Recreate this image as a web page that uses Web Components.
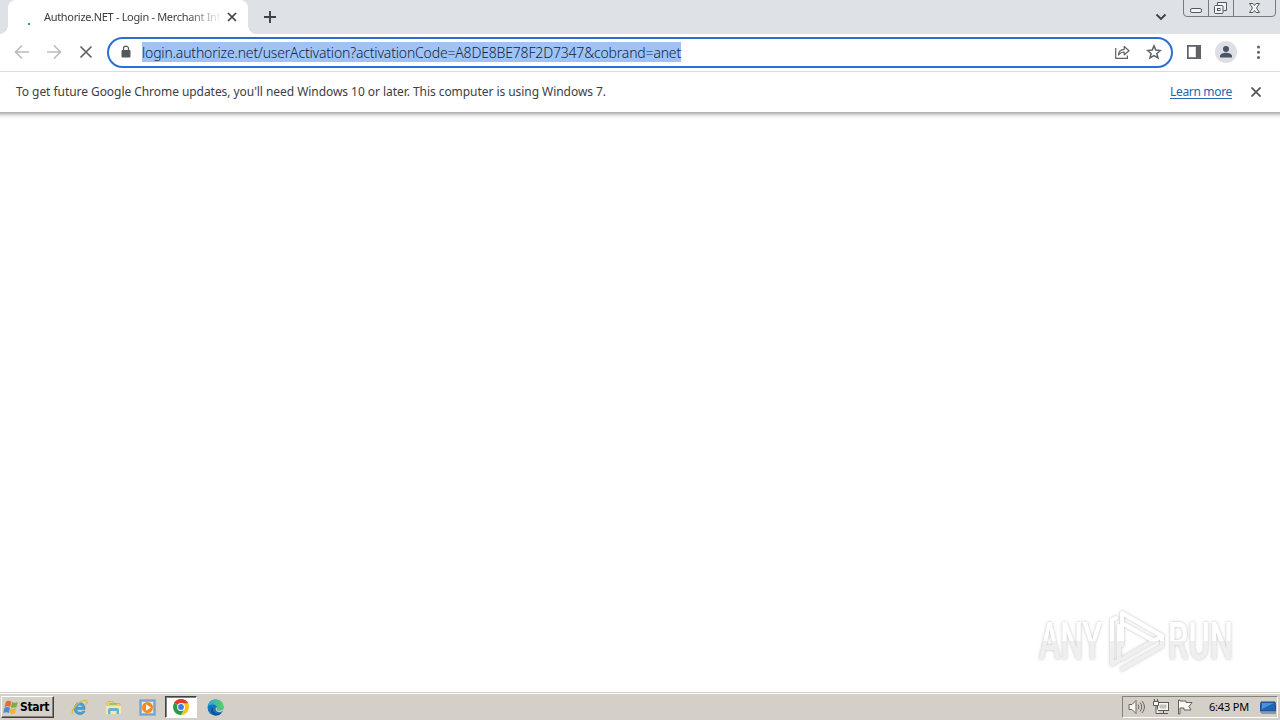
<!DOCTYPE html>
<html lang="en">
<head>
<meta charset="utf-8">
<title>Authorize.NET - Login</title>
<style>
  html, body { margin: 0; width: 1280px; height: 720px; overflow: hidden; background: #fff; }
  body { display: flex; flex-direction: column; font-family: "Noto Sans", "Open Sans", sans-serif; }
</style>
</head>
<body>
<browser-tabs></browser-tabs>
<browser-toolbar></browser-toolbar>
<info-bar>
  <fit-text width="590">To get future Google Chrome updates, you'll need Windows 10 or later. This computer is using Windows 7.</fit-text>
  <fit-text slot="action" width="62">Learn more</fit-text>
</info-bar>
<page-view></page-view>
<task-bar></task-bar>

<script>
function define(name, html) {
  customElements.define(name, class extends HTMLElement {
    constructor() {
      super();
      this.attachShadow({ mode: "open" }).innerHTML = html;
    }
  });
}

define("window-buttons", `
  <style>
    :host { display: block; width: 94px; height: 18px; }
    svg { display: block; }
  </style>
  <svg width="94" height="18" fill="none" stroke="#777a80">
    <path d="M.5 0v13q0 3.500 3.500 3.500h85q3.500 0 3.500-3.500V0M25.500 0v16M50.500 0v16"/>
    <g stroke="#55585e">
      <rect x="7.500" y="8.500" width="11" height="4" rx="1.500" fill="#f2f3f5"/>
      <path d="M34.500 5.500v-3h9v8h-3" fill="#f2f3f5"/>
      <rect x="31.500" y="5.500" width="8.500" height="8" rx="1" fill="#f2f3f5"/>
      <rect x="34.500" y="8.500" width="2.500" height="2"/>
      <path d="M66.500 3.500h3.500l1.500 2 1.500-2h3.500l-3 4.500 3 4.500H73l-1.500-2-1.500 2h-3.500l3-4.500z" fill="#f2f3f5"/>
    </g>
  </svg>
`);

define("browser-tabs", `
  <style>
    :host { display: flex; flex: none; height: 34px; background: #dee1e6; }
    .tab { display: flex; align-items: center; box-sizing: border-box; width: 240px; margin-left: 8px; padding: 0 10px 0 16px; background: #fff; border-radius: 8px 8px 0 0; position: relative; }
    .tab::before, .tab::after { content: ""; position: absolute; bottom: 0; width: 8px; height: 8px; }
    .tab::before { left: -8px; background: radial-gradient(circle at 0 0, transparent 7.500px, #fff 8px); }
    .tab::after { right: -8px; background: radial-gradient(circle at 100% 0, transparent 7.500px, #fff 8px); }
    .spinner { flex: none; width: 19px; height: 16px; }
    .title { width: 176px; margin-left: 1px; font-size: 11px; line-height: 16px; color: #3c4043; -webkit-mask-image: linear-gradient(90deg, #000 143px, transparent 178px); }
    .close { margin-left: 7px; }
    .new { margin: 10px 0 0 15px; }
    .search { margin: 13px 16px 0 auto; }
    window-buttons { margin-right: 3px; }
    svg { display: block; flex: none; }
  </style>
  <div class="tab">
    <svg class="spinner" width="19" height="16"><rect x="4" y="14" width="2" height="2" fill="#3d88d8"/></svg>
    <div class="title"><fit-text width="176">Authorize.NET - Login - Merchant Inf</fit-text></div>
    <svg class="close" width="10" height="10" stroke="#3c4043" stroke-width="1.700"><path d="M1 1l8 8M9 1L1 9"/></svg>
  </div>
  <svg class="new" width="14" height="14" stroke="#3c4043" stroke-width="1.900"><path d="M1 7h12M7 1v12"/></svg>
  <svg class="search" width="12" height="8" fill="none" stroke="#3c4043" stroke-width="1.800"><path d="M1.500 1.500L6 6l4.500-4.500"/></svg>
  <window-buttons></window-buttons>
`);

define("browser-toolbar", `
  <style>
    :host { display: flex; flex: none; align-items: center; box-sizing: border-box; height: 38px; padding: 0 13px 1px 14px; background: #fff; border-bottom: 1px solid #dadce0; }
    svg { display: block; flex: none; }
    .nav { display: flex; gap: 16px; }
    .address { display: flex; align-items: center; box-sizing: border-box; width: 1066px; height: 31px; margin-left: 13px; padding: 0 9px; border: 2px solid #2a70d2; border-radius: 16px; }
    .url { margin-left: 8px; height: 20px; background: #a0c3f5; color: #16233f; font-size: 14px; line-height: 21px; font-weight: 300; }
    .share { margin-left: auto; }
    .star { margin-left: 16px; }
    .panel { margin-left: 13px; }
    .profile { margin: 0 18px 0 13px; }
  </style>
  <div class="nav">
    <svg width="16" height="16" fill="none" stroke="#babcbe" stroke-width="1.700"><path d="M15 8H2M8 1.500L1.500 8 8 14.500"/></svg>
    <svg width="16" height="16" fill="none" stroke="#babcbe" stroke-width="1.700"><path d="M1 8h13M8 1.500L14.500 8 8 14.500"/></svg>
    <svg width="16" height="16" stroke="#5f6368" stroke-width="1.700"><path d="M2.500 2.500l11 11M13.500 2.500l-11 11"/></svg>
  </div>
  <div class="address">
    <svg width="16" height="16"><rect x="3.500" y="6" width="9" height="7.500" rx="1" fill="#55595d"/><path d="M5.500 6.500V4.700a2.500 2.500 0 015 0v1.800" fill="none" stroke="#55595d" stroke-width="1.200"/></svg>
    <fit-text class="url" width="539">login.authorize.net/userActivation?activationCode=A8DE8BE78F2D7347&amp;cobrand=anet</fit-text>
    <svg class="share" width="16" height="16" fill="none" stroke="#5f6368" stroke-width="1.200"><path d="M1.700 4v10.400h11.700v-3"/><path d="M4.500 11q.3-5.500 5.700-5.700V2.500L15 6.700l-4.800 4.100V8Q7 7.800 4.500 11z" stroke-linejoin="round"/></svg>
    <svg class="star" width="16" height="16" fill="none" stroke="#5f6368" stroke-width="1.500"><path d="M8 1.900l1.800 4.200 4.600.4-3.500 3 1.100 4.500L8 11.600 4 14l1.100-4.500-3.500-3 4.600-.4z"/></svg>
  </div>
  <svg class="panel" width="16" height="16"><path fill="#5f6368" fill-rule="evenodd" d="M1 1h14v14H1zm1.700 1.700v10.600h7.100V2.700z"/></svg>
  <svg class="profile" width="22" height="22"><circle cx="11" cy="11" r="11" fill="#dcdfe4"/><g fill="#4b5366"><circle cx="11" cy="8" r="3"/><path d="M5 16.500v-1.300c0-2.300 3.500-3.400 6-3.400s6 1.100 6 3.400v1.300z"/></g></svg>
  <svg width="8" height="16" fill="#5f6368"><circle cx="3.500" cy="3" r="1.500"/><circle cx="3.500" cy="8.300" r="1.500"/><circle cx="3.500" cy="13.500" r="1.500"/></svg>
`);

define("info-bar", `
  <style>
    :host { display: flex; flex: none; align-items: center; box-sizing: border-box; height: 41px; padding: 0 19px 1px 16px; background: #fff; border-bottom: 1px solid #b4b4b4; color: #3c4043; font-size: 12px; line-height: 18px; }
    .action { margin-left: auto; color: #2464b4; text-decoration: underline; text-underline-offset: 2px; }
    svg { display: block; margin-left: 19px; }
  </style>
  <slot></slot>
  <div class="action"><slot name="action"></slot></div>
  <svg width="10" height="10" stroke="#55595d" stroke-width="1.800"><path d="M.5.500l9 9M9.500.500l-9 9"/></svg>
`);

define("page-view", `
  <style>
    :host { display: flex; flex: 1; align-items: flex-end; justify-content: flex-end; padding: 0 38px 14px 0; background: linear-gradient(#b6b6b6, #dedede 2px, #f6f6f6 4px, #fff 7px); }
    svg { display: block; overflow: visible; }
  </style>
  <svg width="210" height="72" viewBox="1032 606 210 72">
    <defs>
      <filter id="soft" x="-10%" y="-20%" width="120%" height="140%">
        <feDropShadow dx="0" dy="0" stdDeviation="1.500" flood-color="#777" flood-opacity=".5"/>
      </filter>
      <linearGradient id="shade" gradientUnits="userSpaceOnUse" x1="0" y1="606" x2="0" y2="678">
        <stop offset=".48" stop-color="#fff"/><stop offset=".49" stop-color="#efefef"/>
      </linearGradient>
    </defs>
    <g filter="url(#soft)" fill="url(#shade)" font-family="Roboto, sans-serif" font-size="51" font-weight="500">
      <text x="1039" y="659" textLength="63" lengthAdjust="spacingAndGlyphs">ANY</text>
      <text x="1168" y="659" textLength="65" lengthAdjust="spacingAndGlyphs">RUN</text>
      <g fill="none" stroke="url(#shade)" stroke-width="4" stroke-linejoin="round" stroke-linecap="round">
        <path d="M1122 645v-32l40 23-40 23"/>
        <path d="M1122 623l32 18"/>
        <path d="M1116 618l-4 2v44l7-4v-34M1122 669l40-23v-10"/>
      </g>
    </g>
  </svg>
`);

define("task-bar", `
  <style>
    :host { display: flex; flex: none; align-items: center; box-sizing: border-box; height: 28px; padding: 1px 2px 0 1px; background: #d4d0c8; border-top: 1px solid #d4d0c8; box-shadow: inset 0 1px #fff; color: #000; }
    svg { display: block; flex: none; }
    .start { display: flex; align-items: center; box-sizing: border-box; width: 53px; height: 22px; padding-left: 1px; border: 1px solid; border-color: #fff #404040 #404040 #fff; box-shadow: inset -1px -1px #85817b; font: bold 12px "DejaVu Sans Condensed", sans-serif; }
    .apps { display: flex; align-items: center; gap: 2px; margin-left: 9px; }
    .app { display: grid; place-items: center; box-sizing: border-box; width: 32px; height: 22px; }
    .app.active { background: #fff; border: 1px solid; border-color: #404040 #fff #fff #404040; box-shadow: inset 1px 1px #85817b; }
    .tray { display: flex; align-items: center; box-sizing: border-box; width: 156px; height: 22px; margin-left: auto; padding-left: 5px; border: 1px solid; border-color: #85817b #fff #fff #85817b; }
    .tray .icons { display: flex; gap: 8px; }
    .time { margin: 0 11px 0 16px; font-size: 11px; line-height: 16px; }
  </style>
  <div class="start">
    <svg width="17" height="17"><path d="M3 2.500q3-1.500 5.300.200L7.200 8Q4.500 6.500 1.600 8z" fill="#e66b37"/><path d="M9 3q3 1.500 6-.1L13.500 8q-3 1.500-5.600.300z" fill="#7eae43"/><path d="M1.400 8.800q2.900-1.400 5.600.1l-1.200 5Q3.400 12.600.4 14z" fill="#4a8bcc"/><path d="M7.700 9.200q2.700 1.400 5.600-.1L12 14.200q-3 1.400-5.400-.1z" fill="#f0b52f"/></svg>
    <fit-text width="29">Start</fit-text>
  </div>
  <div class="apps">
    <div class="app"><svg width="17" height="17" fill="none"><path d="M14 10.300H5.500q.3 3.200 3.500 3.200 1.800 0 2.700-1.200h2.200Q12.500 15.500 9 15.500q-5.700-.5-5.700-6Q3.500 4 9 3.700q5 .3 5 6.600zM5.600 8.500h6.100q-.4-2.700-2.900-2.700-2.600 0-3.200 2.700z" fill="#48a9df" stroke="#3688bb" stroke-width=".8"/><path d="M2.200 14.800Q-.5 13.500 4 7.500 10.500.5 15 1.500q2 1 .2 4" stroke="#e4b83a" stroke-width="1.300"/></svg></div>
    <div class="app"><svg width="17" height="17"><path d="M2 3.500l1-1h5l1 2h6V14H2z" fill="#ecd278" stroke="#bca354" stroke-width=".5"/><path d="M1 7h15v8H1z" fill="#f7e9a6"/><path d="M3 15v-4q0-2 2-2h7q2 0 2 2v4h-2.500v-3h-6v3z" fill="#62b5d9"/><path d="M4 5h8" stroke="#7fbf68" stroke-width="1.400"/></svg></div>
    <div class="app"><svg width="17" height="17"><rect x="1" y="1" width="15" height="15" fill="#8ab7de" stroke="#5b94c6"/><rect x="3" y="3" width="11" height="11" fill="#e4edf4"/><circle cx="8.500" cy="8.500" r="5.500" fill="#f48a1d"/><path d="M7 5.200v6.600l5-3.300z" fill="#fff"/></svg></div>
    <div class="app active"><svg width="16" height="16"><path d="M8 8L1.100 4A8 8 0 0114.900 4z" fill="#e33b2e"/><path d="M8 8l6.900-4A8 8 0 018 16l4-6z" fill="#fbc116"/><path d="M8 8l3.500 2L8 16A8 8 0 011.100 4z" fill="#2a9c49"/><path d="M8 4h6.900q1.100 2 1.100 4h-5z" fill="#fbc116"/><path d="M1.100 4A8 8 0 0114.900 4.300H8z" fill="#e33b2e"/><circle cx="8" cy="8" r="3.900" fill="#fff"/><circle cx="8" cy="8" r="2.900" fill="#397ee8"/></svg></div>
    <div class="app"><svg width="17" height="17"><defs><linearGradient id="edge"><stop stop-color="#20a8df"/><stop offset="1" stop-color="#62cf60"/></linearGradient></defs><circle cx="8.500" cy="8.500" r="8" fill="#1474bd"/><path d="M.7 7.500Q2 .500 8.500.500q8 .5 8 7-.5 4-4.500 4-3 0-2-2.300Q9.800 5.600 6 5.600 2.500 5.400.7 7.500z" fill="url(#edge)"/><path d="M6.300 8q-1.500 5.500 4 6.500 2.700.2 4.600-1.100-3.200 4.200-7.600 2.900Q1 12 6.300 8z" fill="#174d91"/><path d="M9 8q-1.500 4.300 3 5.300 2.500 0 4-1.800V10q-1.500 1.500-4 1.500-3 0-2-2.300z" fill="#d4d0c8"/></svg></div>
  </div>
  <div class="tray">
    <div class="icons">
      <svg width="17" height="16" fill="none" stroke="#69675f"><path d="M1 5.500h3l4-4v13l-4-4H1z" fill="#f8f8f5"/><path d="M10 5.500q2 2.500 0 5M12 3.500q3.500 4.500 0 9M14 2q5 6 0 12"/></svg>
      <svg width="16" height="16" fill="none" stroke="#5b5953"><rect x="4.500" y="3.500" width="11" height="8" fill="#f8f8f5"/><rect x="6.500" y="5.500" width="7" height="4" fill="#c4c1ba" stroke="none"/><path d="M10.500 12v2M6 14.500h9"/><path d="M.5 2.500h5v4h-5zM1.500 0v3M4.500 0v3M3 6.500v8h3" fill="#f8f8f5"/></svg>
      <svg width="16" height="16" fill="#f8f8f5" stroke="#65635d"><path d="M1.500 1v14h1.500V9h4v2h7l-2-3.500 3-4H9V2H3V1z"/></svg>
    </div>
    <fit-text class="time" width="40">6:43 PM</fit-text>
    <svg width="16" height="15"><path d="M1 2h14l1 9H0z" fill="#1e65b8" stroke="#1b4985"/><path d="M2 3h12L2 9z" fill="#4a91d5"/><path d="M0 12h16v2H2z" fill="#8a97a7"/></svg>
  </div>
`);

// One line of text, tracked so that it takes up exactly `width` pixels.
// Registered last: it measures itself in the styles of the bars above.
class FitText extends HTMLElement {
  constructor() {
    super();
    this.attachShadow({ mode: "open" });
  }

  connectedCallback() {
    this.shadowRoot.innerHTML = `
      <style>
        :host { display: block; white-space: nowrap; }
      </style>
      <span><slot></slot></span>
    `;
    const width = Number(this.getAttribute("width"));
    const span = this.shadowRoot.querySelector("span");
    const natural = span.getBoundingClientRect().width;
    this.style.width = `${width}px`;
    span.style.letterSpacing = `${(width - natural) / this.textContent.trim().length}px`;
  }
}

customElements.define("fit-text", FitText);
</script>
</body>
</html>
